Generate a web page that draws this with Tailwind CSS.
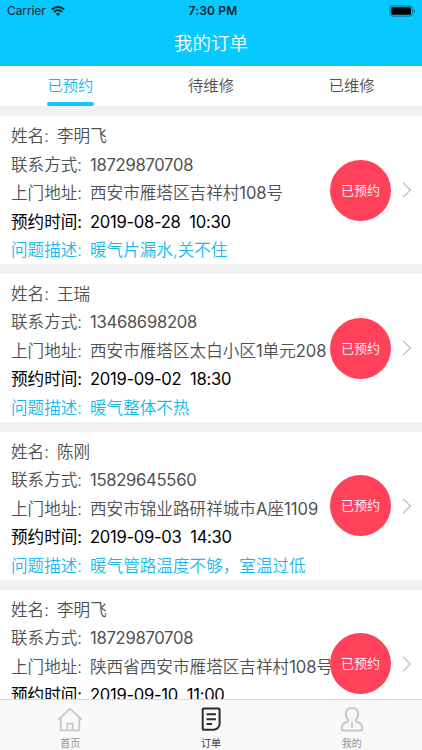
<!DOCTYPE html>
<html lang="zh-CN">
<head>
<meta charset="UTF-8" />
<meta name="viewport" content="width=device-width, initial-scale=1.0"/>
<title>我的订单</title>
<script src="https://cdn.jsdelivr.net/npm/@tailwindcss/browser@4"></script>
</head>
<body class="font-['Inter','Noto_Sans_CJK_SC',sans-serif] bg-[#f1f1f1] text-[#505050]">

<div class="flex flex-col w-[422px] h-[750px] overflow-hidden">

  <!-- Header -->
  <header class="h-[66px] shrink-0 bg-[#08c9ff]">
    <div class="grid grid-cols-3 items-center h-[22px] pl-[7px] pr-[6px] text-xs text-[#10232b]">
      <div class="flex items-center gap-[5px]">
        <span class="tracking-[-0.1px]">Carrier</span>
        <svg class="w-[14px] h-[10px]" viewBox="0 0 14 10" fill="none" stroke="#10232b" stroke-width="2">
          <path d="M0.8 3.6a8.8 8.8 0 0 1 12.4 0"/>
          <path d="M3 6a5.7 5.7 0 0 1 8 0"/>
          <path d="M7 10 4.9 7.8a3 3 0 0 1 4.2 0z" fill="#10232b" stroke="none"/>
        </svg>
      </div>
      <span class="pl-[3px] text-center font-semibold whitespace-nowrap tracking-[0.2px]">7:30 PM</span>
      <svg class="w-[27px] h-[12px] justify-self-end" viewBox="0 0 27 12">
        <rect x="0.9" y="0.9" width="22.4" height="10.2" rx="2.4" fill="none" stroke="#086a87" stroke-width="1"/>
        <rect x="2.3" y="2.3" width="19.6" height="7.4" rx="1.2" fill="#000"/>
        <path d="M24.6 4v4c1.6-.6 1.6-3.4 0-4z" fill="#086a87"/>
      </svg>
    </div>
    <h1 class="h-[42px] text-center text-[18.5px] leading-[43px] text-white font-[350]">我的订单</h1>
  </header>

  <!-- Tabs -->
  <nav class="grid grid-cols-3 h-10 shrink-0 bg-white text-center text-[15.3px] leading-[40px] font-[350]">
    <div class="relative text-[#18b9ea]">已预约
      <span class="absolute left-[47px] bottom-0 w-[47px] h-1 rounded-full bg-[#14c4fa]"></span>
    </div>
    <div>待维修</div>
    <div>已维修</div>
  </nav>

  <!-- Orders -->
  <main class="flex-1 min-h-0 overflow-hidden pt-[10px] space-y-[10px] text-[16.6px] leading-[28.5px] whitespace-nowrap font-[350]">
    <section class="relative h-[147.9px] bg-white pl-[11px] pt-[6px]">
      <p class="flex"><span class="w-[46px]">姓名:</span><span>李明飞</span></p>
      <p class="flex"><span class="w-[79px]">联系方式:</span><span class="font-normal tracking-[-0.28px]">18729870708</span></p>
      <p class="flex"><span class="w-[79px]">上门地址:</span><span>西安市雁塔区吉祥村<span class="font-normal tracking-[-0.1px]">108</span>号</span></p>
      <p class="flex font-normal text-black"><span class="w-[79px]">预约时间:</span><span class="tracking-[-0.29px]">2019-08-28&nbsp; 10:30</span></p>
      <p class="flex text-[#18b9ea]"><span class="w-[79px]">问题描述:</span><span>暖气片漏水,关不住</span></p>
      <div class="absolute right-[10px] top-[43.7px] flex items-center gap-[11px]">
        <span class="size-[61px] rounded-full bg-[#ff4259] text-center text-[13px] leading-[60px] text-white">已预约</span>
        <svg class="w-[10px] h-[16px]" viewBox="0 0 10 16" fill="none" stroke="#c4c4c6" stroke-width="1.4"><path d="M1 .8 8.4 8 1 15.2"/></svg>
      </div>
    </section>
    <section class="relative h-[147.9px] bg-white pl-[11px] pt-[6px]">
      <p class="flex"><span class="w-[46px]">姓名:</span><span>王瑞</span></p>
      <p class="flex"><span class="w-[79px]">联系方式:</span><span class="font-normal tracking-[-0.28px]">13468698208</span></p>
      <p class="flex"><span class="w-[79px]">上门地址:</span><span>西安市雁塔区太白小区<span class="font-normal tracking-[-0.1px]">1</span>单元<span class="font-normal tracking-[-0.1px]">208</span></span></p>
      <p class="flex font-normal text-black"><span class="w-[79px]">预约时间:</span><span class="tracking-[-0.29px]">2019-09-02&nbsp; 18:30</span></p>
      <p class="flex text-[#18b9ea]"><span class="w-[79px]">问题描述:</span><span>暖气整体不热</span></p>
      <div class="absolute right-[10px] top-[43.7px] flex items-center gap-[11px]">
        <span class="size-[61px] rounded-full bg-[#ff4259] text-center text-[13px] leading-[60px] text-white">已预约</span>
        <svg class="w-[10px] h-[16px]" viewBox="0 0 10 16" fill="none" stroke="#c4c4c6" stroke-width="1.4"><path d="M1 .8 8.4 8 1 15.2"/></svg>
      </div>
    </section>
    <section class="relative h-[147.9px] bg-white pl-[11px] pt-[6px]">
      <p class="flex"><span class="w-[46px]">姓名:</span><span>陈刚</span></p>
      <p class="flex"><span class="w-[79px]">联系方式:</span><span class="font-normal tracking-[-0.28px]">15829645560</span></p>
      <p class="flex"><span class="w-[79px]">上门地址:</span><span>西安市锦业路研祥城市<span class="font-normal">A</span>座<span class="font-normal">1109</span></span></p>
      <p class="flex font-normal text-black"><span class="w-[79px]">预约时间:</span><span class="tracking-[-0.29px]">2019-09-03&nbsp; 14:30</span></p>
      <p class="flex text-[#18b9ea]"><span class="w-[79px]">问题描述:</span><span>暖气管路温度不够，室温过低</span></p>
      <div class="absolute right-[10px] top-[43.5px] flex items-center gap-[11px]">
        <span class="size-[61px] rounded-full bg-[#ff4259] text-center text-[13px] leading-[60px] text-white">已预约</span>
        <svg class="w-[10px] h-[16px]" viewBox="0 0 10 16" fill="none" stroke="#c4c4c6" stroke-width="1.4"><path d="M1 .8 8.4 8 1 15.2"/></svg>
      </div>
    </section>
    <section class="relative h-[147.9px] bg-white pl-[11px] pt-[6px]">
      <p class="flex"><span class="w-[46px]">姓名:</span><span>李明飞</span></p>
      <p class="flex"><span class="w-[79px]">联系方式:</span><span class="font-normal tracking-[-0.28px]">18729870708</span></p>
      <p class="flex"><span class="w-[79px]">上门地址:</span><span>陕西省西安市雁塔区吉祥村<span class="font-normal tracking-[-0.1px]">108</span>号</span></p>
      <p class="flex font-normal text-black"><span class="w-[79px]">预约时间:</span><span class="tracking-[-0.29px]">2019-09-10&nbsp; 11:00</span></p>
      <div class="absolute right-[10px] top-[43.5px] flex items-center gap-[11px]">
        <span class="size-[61px] rounded-full bg-[#ff4259] text-center text-[13px] leading-[60px] text-white">已预约</span>
        <svg class="w-[10px] h-[16px]" viewBox="0 0 10 16" fill="none" stroke="#c4c4c6" stroke-width="1.4"><path d="M1 .8 8.4 8 1 15.2"/></svg>
      </div>
    </section>
  </main>

  <!-- Bottom tab bar -->
  <footer class="grid grid-cols-3 h-[51px] shrink-0 border-t border-[#dadada] bg-[#f9f9f9] text-[10px] leading-[14px] text-[#929292]">
    <div class="flex flex-col items-center pt-[6px] gap-[2px]">
      <svg class="size-[28px]" viewBox="0 0 28 28" fill="none" stroke="#c9c8c6" stroke-width="1.8">
        <path d="M2.3 13.7 14 2.8l11.7 10.9M4.7 12v12.4h18.6V12"/>
        <path d="M11.3 24.4v-6.7h5.4v6.7" stroke-width="1.7"/>
      </svg>
      <span>首页</span>
    </div>
    <div class="flex flex-col items-center pt-[6px] gap-[2px] text-[#333]">
      <svg class="size-[28px]" viewBox="0 0 28 28" fill="none" stroke="#2b2b2b" stroke-width="2">
        <path d="M6.7 2.6h14.9a1 1 0 0 1 1 1v14.2a6 6 0 0 1-6 6H6.7a1 1 0 0 1-1-1V3.6a1 1 0 0 1 1-1z"/>
        <path d="M9.5 8.3h9.4M9.5 13.2h9.4M9.5 18h5.5"/>
      </svg>
      <span>订单</span>
    </div>
    <div class="flex flex-col items-center pt-[6px] gap-[2px]">
      <svg class="size-[28px]" viewBox="0 0 28 28" fill="none" stroke="#c9c8c6" stroke-width="2" stroke-linejoin="round">
        <path d="M10.6 14.2C8.8 12.6 7.7 10.7 7.7 8.3c0-4 2.5-6.2 6.3-6.2s6.3 2.2 6.3 6.2c0 2.4-1.1 4.3-2.9 5.9.2 1.3 1 1.6 2.4 2.1 3 1.1 4.2 2.2 4.2 4.5v3.7H4v-3.7c0-2.3 1.2-3.4 4.2-4.5 1.4-.5 2.2-.8 2.4-2.1z"/>
        <path d="M14 16v5.7"/>
      </svg>
      <span>我的</span>
    </div>
  </footer>

</div>

</body>
</html>
